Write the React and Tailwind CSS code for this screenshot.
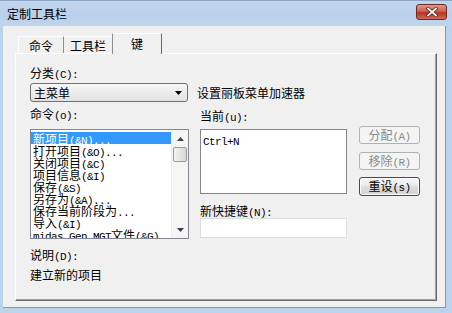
import React from "react";

const CJK = /([\u3000-\u9fff\uff00-\uffef]+)/;

function T({ children, className = "" }) {
  const parts = String(children).split(CJK);
  return (
    <span className={"whitespace-pre " + className}>
      {parts.map((p, i) =>
        p === "" ? null : CJK.test(p) ? (
          <span key={i} className="font-['Noto_Sans_CJK_SC',sans-serif] text-[12px]">
            {p}
          </span>
        ) : (
          <span key={i} className="font-['Liberation_Mono',monospace] text-[11px] tracking-[-0.6px]">
            {p}
          </span>
        )
      )}
    </span>
  );
}

function Btn({ children, disabled }) {
  return (
    <div
      className={
        "w-[61px] flex items-center justify-center rounded-[3px] border leading-[14px] " +
        (disabled
          ? "h-[18px] border-[#adb2b5] bg-[#f4f4f4] text-[#8a8a8a]"
          : "h-[19px] border-[#4a4a4a] bg-[linear-gradient(#f6f6f6,#ebebeb_45%,#dddddd_50%,#d4d4d4)] text-black shadow-[inset_0_0_0_1px_#fbfbfb]")
      }
    >
      <T>{children}</T>
    </div>
  );
}

const items = [
  "新项目(&N)...",
  "打开项目(&O)...",
  "关闭项目(&C)",
  "项目信息(&I)",
  "保存(&S)",
  "另存为(&A)...",
  "保存当前阶段为...",
  "导入(&I)",
  "midas Gen MGT文件(&G)...",
];

export default function App() {
  return (
    <div className="w-[452px] h-[313px] overflow-hidden flex flex-col bg-[#bcd3ec] text-black">
      {/* Title bar */}
      <div className="h-[26px] flex items-center border-t border-[#8aa5c4] bg-[linear-gradient(#c2d6ec,#b9d0ea_60%,#c0d5ec)]">
        <div className="ml-[7px] leading-[14px]">
          <T>定制工具栏</T>
        </div>
        <div className="ml-auto mr-[5px] mt-[-3px] w-[31px] h-[16px] rounded-[3px] border border-[#6e2a22] bg-[linear-gradient(#e2998c,#cf5f4c_45%,#b8321f_55%,#cf6a55)] flex items-center justify-center">
          <svg width="12" height="10" viewBox="0 0 12 10">
            <path d="M2 1.5 L10 8.5 M10 1.5 L2 8.5" stroke="#5a2018" strokeWidth="3.4" strokeLinecap="square" />
            <path d="M2 1.5 L10 8.5 M10 1.5 L2 8.5" stroke="#ffffff" strokeWidth="1.8" strokeLinecap="square" />
          </svg>
        </div>
      </div>

      {/* Client area */}
      <div className="flex-1 ml-[3px] mr-[6px] mb-[5px] bg-[#f0f0f0] border-r border-b border-[#7d98b6] flex flex-col">
        <div className="ml-[12px] mt-[7px] w-[422px] flex flex-col">
          {/* Tabs */}
          <div className="h-[20px] flex items-end pl-[3px] relative z-10">
            <div className="w-[46px] h-[17px] border-t border-l border-white border-r border-r-[#8e8e8e] flex items-center justify-center leading-[14px]">
              <T>命令</T>
            </div>
            <div className="w-[48px] h-[17px] border-t border-white flex items-center justify-center leading-[14px]">
              <T>工具栏</T>
            </div>
            <div className="w-[50px] h-[21px] mb-[-1px] bg-[#f0f0f0] border-t border-l border-l-[#8e8e8e] border-t-white border-r border-r-[#696969] flex items-center justify-center leading-[14px] pb-[1px]">
              <T>键</T>
            </div>
          </div>

          {/* Panel */}
          <div className="h-[248px] border-t border-l border-white border-r border-b border-r-[#696969] border-b-[#696969] shadow-[inset_-1px_-1px_0_#a0a0a0] flex flex-col pl-[14px] pt-[11px]">
            <div className="h-[14px] leading-[14px]">
              <T>分类(C):</T>
            </div>
            <div className="flex items-center mt-[4px]">
              <div className="w-[158px] h-[19px] rounded-[3px] border border-[#707070] bg-[linear-gradient(#f7f7f7,#ececec_50%,#e2e2e2)] flex items-center pl-[3px] pr-[5px] leading-[14px]">
                <T>主菜单</T>
                <svg className="ml-auto" width="7" height="4" viewBox="0 0 7 4">
                  <path d="M0 0 H7 L3.5 4 Z" fill="#000" />
                </svg>
              </div>
              <div className="ml-[9px] leading-[14px]">
                <T>设置丽板菜单加速器</T>
              </div>
            </div>

            <div className="flex">
              {/* Left column */}
              <div className="w-[159px] flex flex-col">
                <div className="h-[14px] leading-[14px] mt-[4px]">
                  <T>命令(o):</T>
                </div>
                <div className="mt-[9px] h-[110px] border border-[#828790] bg-white flex">
                  <div className="w-[140px] overflow-hidden pt-[2px] flex flex-col">
                    {items.map((it, i) => (
                      <div
                        key={i}
                        className={
                          "h-[12px] leading-[12px] pl-[2px] whitespace-nowrap " +
                          (i === 0 ? "bg-[#3399ff] text-white" : "")
                        }
                      >
                        <T>{it}</T>
                      </div>
                    ))}
                  </div>
                  <div className="w-[17px] bg-[#f5f5f5] border-l border-[#ececec] flex flex-col items-center">
                    <div className="h-[17px] w-full flex items-center justify-center">
                      <svg width="7" height="4" viewBox="0 0 7 4">
                        <path d="M3.5 0 L7 4 H0 Z" fill="#404040" />
                      </svg>
                    </div>
                    <div className="w-[14px] h-[15px] rounded-[2px] border border-[#9a9a9a] bg-[linear-gradient(90deg,#f3f3f3,#e6e6e6_50%,#d6d6d6)]" />
                    <div className="mt-auto h-[17px] w-full flex items-center justify-center">
                      <svg width="7" height="4" viewBox="0 0 7 4">
                        <path d="M0 0 H7 L3.5 4 Z" fill="#404040" />
                      </svg>
                    </div>
                  </div>
                </div>
              </div>

              {/* Right column */}
              <div className="ml-[11px] w-[147px] flex flex-col">
                <div className="mt-[6px] h-[14px] leading-[14px]">
                  <T>当前(u):</T>
                </div>
                <div className="mt-[7px] h-[65px] border border-[#828790] bg-white pl-[2px] pt-[2px] leading-[14px]">
                  <T>Ctrl+N</T>
                </div>
                <div className="mt-[9px] h-[14px] leading-[14px]">
                  <T>新快捷键(N):</T>
                </div>
                <div className="mt-[1px] h-[20px] border border-[#dcdcdc] bg-white" />
              </div>

              {/* Buttons */}
              <div className="ml-[12px] flex flex-col">
                <div className="mt-[24px]">
                  <Btn disabled>分配(A)</Btn>
                </div>
                <div className="mt-[8px]">
                  <Btn disabled>移除(R)</Btn>
                </div>
                <div className="mt-[7px]">
                  <Btn>重设(s)</Btn>
                </div>
              </div>
            </div>

            <div className="mt-[8px] h-[14px] leading-[14px]">
              <T>说明(D):</T>
            </div>
            <div className="mt-[6px] h-[14px] leading-[14px]">
              <T>建立新的项目</T>
            </div>
          </div>
        </div>
      </div>
    </div>
  );
}
